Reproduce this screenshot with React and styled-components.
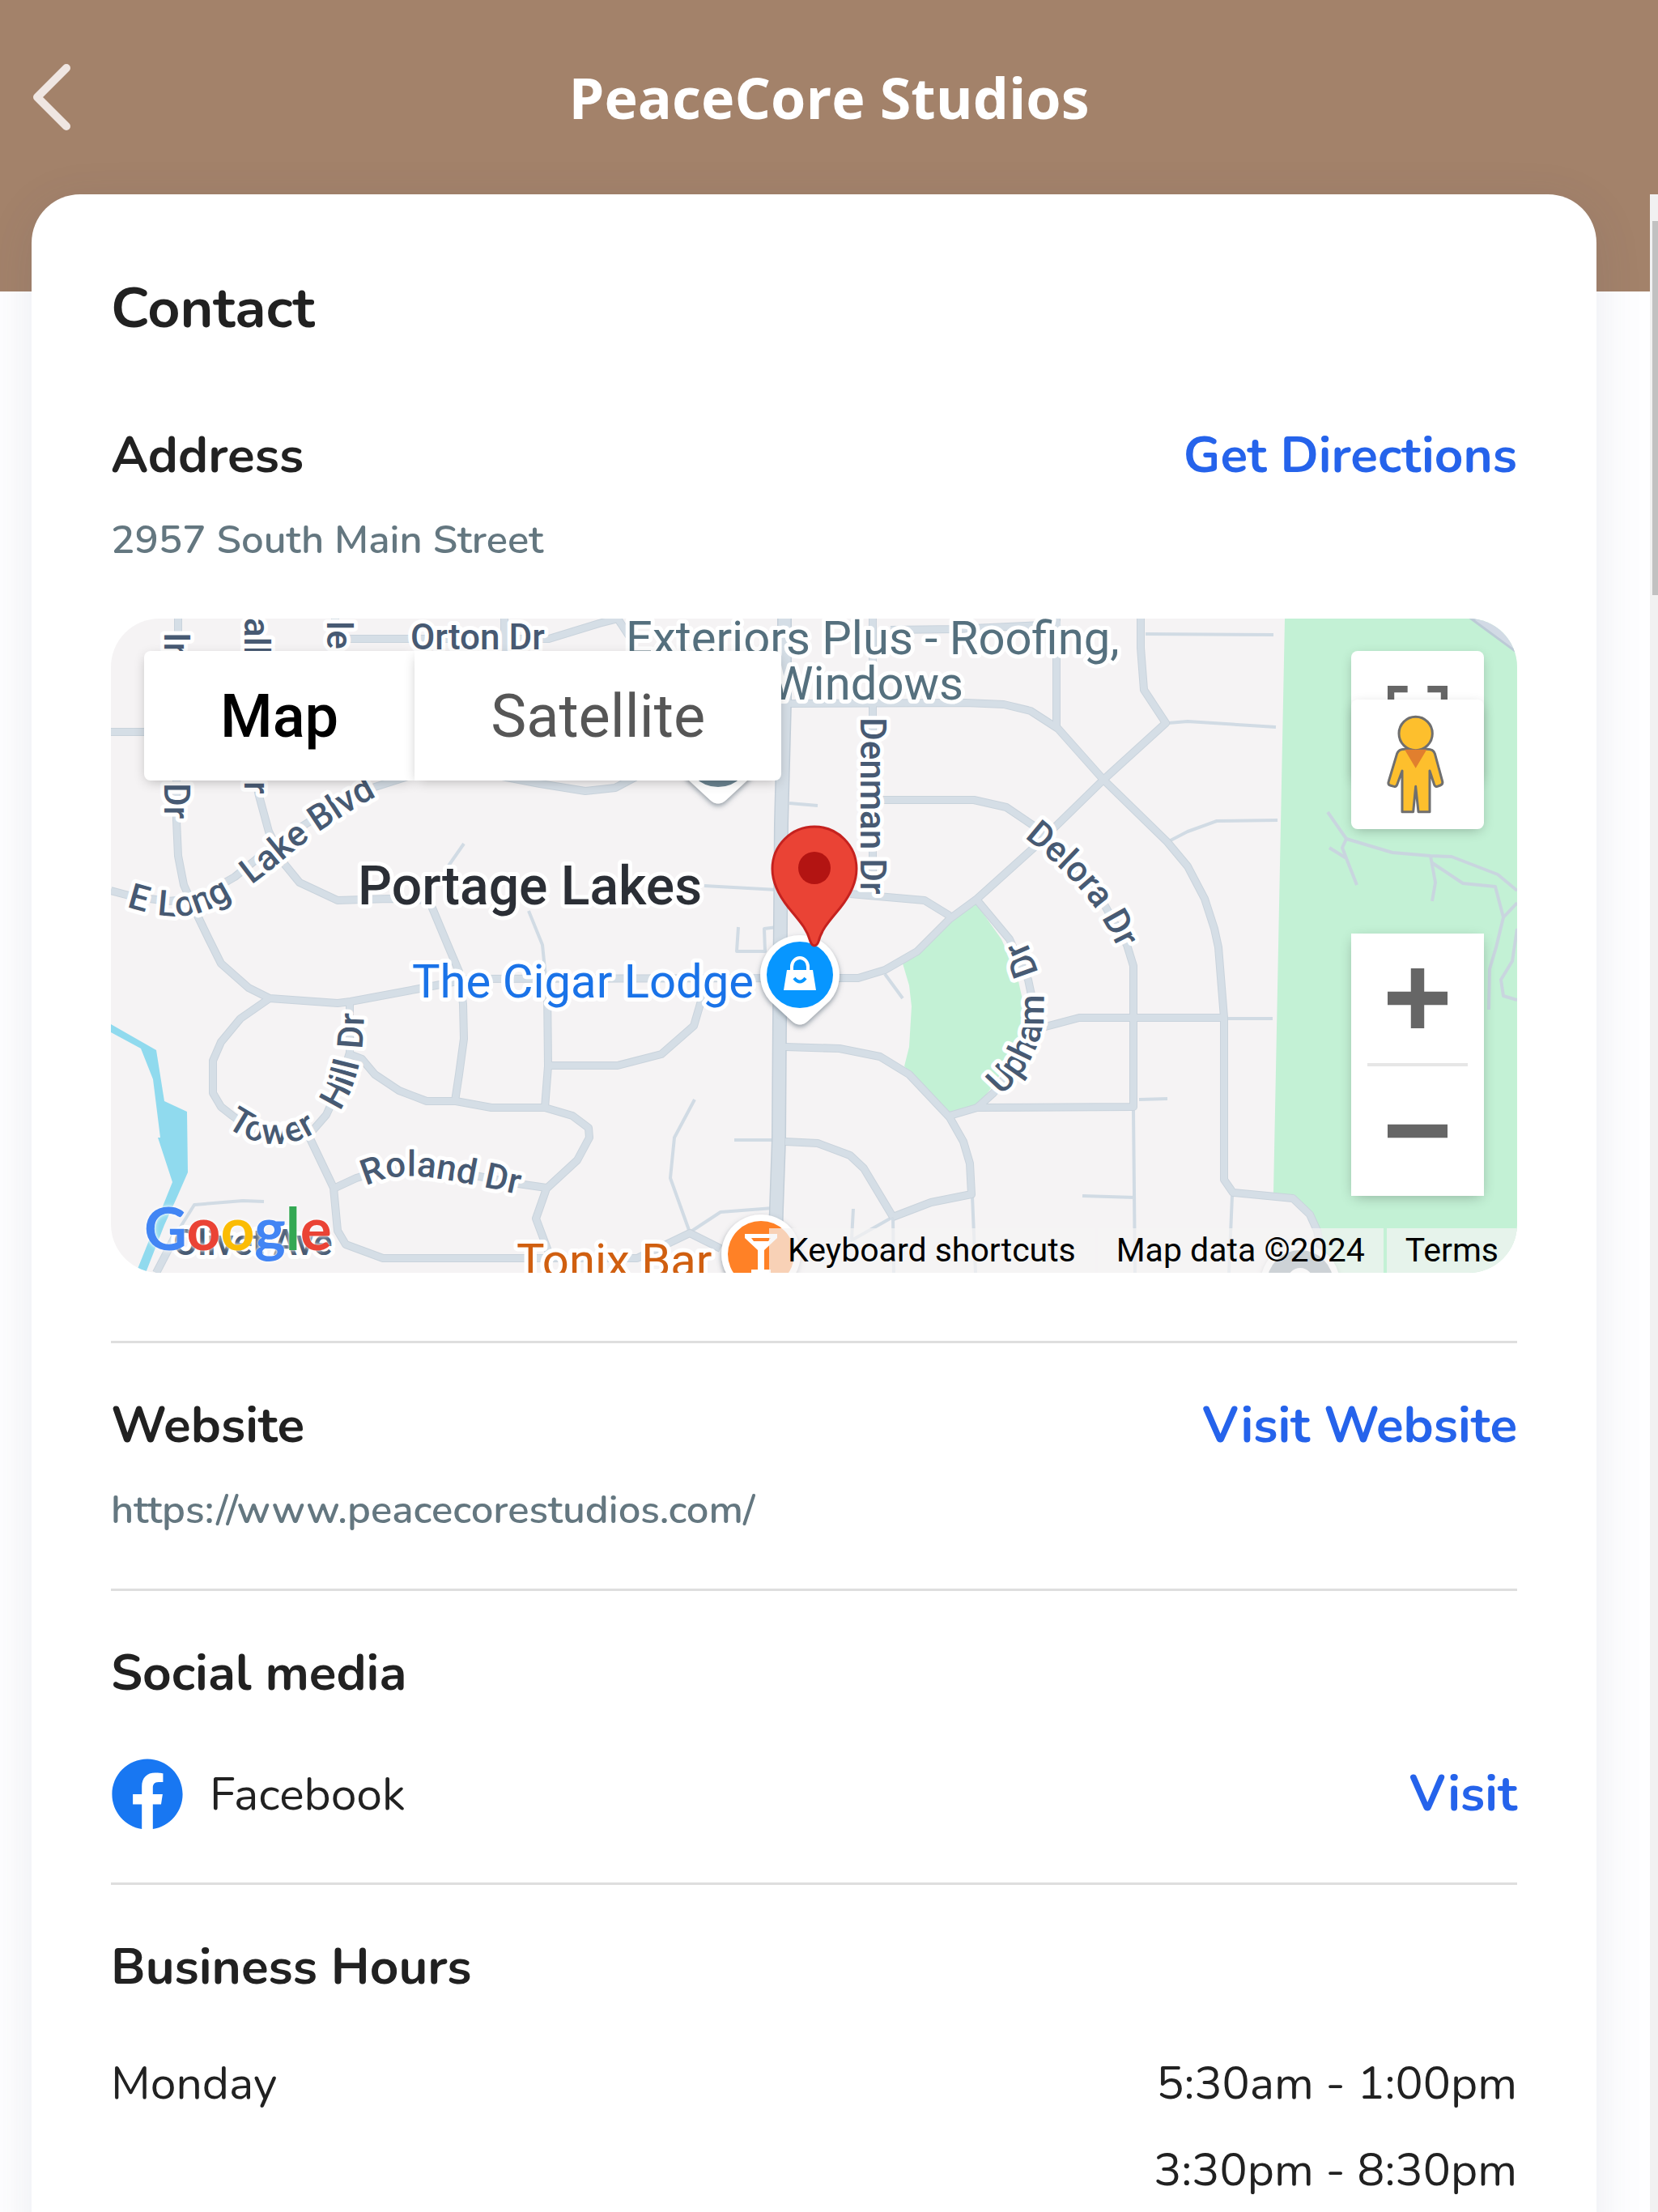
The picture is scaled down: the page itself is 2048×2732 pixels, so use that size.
import React, { useState } from "react";
import styled, { createGlobalStyle } from "styled-components";
import { FaFacebook } from "react-icons/fa";

const hours = [{ day: "Monday", slots: ["5:30am - 1:00pm", "3:30pm - 8:30pm"] }];

const streets = [
  "M137 904 H190",
  "M220 764 V806 M317 764 V806 M414 764 V806",
  "M218 960 V1013 L220 1057 L227 1093 L245 1133 L258 1160 L273 1190 L307 1220 L333 1233 L417 1239 L433 1237 L513 1222 L580 1209 L1060 1208 L1093 1198 L1133 1175 L1173 1135 L1207 1110 L1277 1047 L1363 963 L1440 893 L1413 852 L1409 800 V764",
  "M137 1100 L163 1107 L207 1113 L243 1110 L290 1083 L343 1040 L410 997 L463 972 L510 957",
  "M610 957 L667 968 L723 977 L760 973 L790 957",
  "M313 950 L320 983 L332 1027 L352 1068 L370 1090 L417 1112 L480 1110 L530 1112 L553 1167 L567 1200 L572 1240 L573 1283 L567 1327 L562 1360",
  "M333 1233 L297 1258 L273 1287 L263 1310 V1350 L273 1367 L287 1378 L317 1400 L347 1407 L383 1400 L403 1377 L420 1340 L432 1300 V1240",
  "M380 1400 L412 1467 L417 1520 L427 1537 L473 1554 H787 L827 1535 L852 1523 L890 1542",
  "M412 1468 L440 1455 L490 1440 L560 1447 L640 1462 L675 1467",
  "M434 1303 L447 1308 L463 1327 L493 1347 L527 1360 H563 L607 1368 H673 L707 1378 L727 1393 L728 1405 L713 1433 L675 1468 L662 1505 L677 1545",
  "M673 1368 L677 1317 L676 1220",
  "M677 1316 H763 L817 1302 L857 1267 L867 1233 V1208",
  "M1050 1104 L1142 1112 L1173 1131",
  "M1078 764 V1105",
  "M976 869 L1193 868 L1240 870 L1273 878 L1307 900 L1363 963 L1442 1040 L1467 1070 L1488 1110 L1500 1147 L1505 1170 L1512 1257 V1457 L1523 1473 L1597 1480 L1618 1500 L1627 1520 L1637 1572",
  "M1305 764 V900",
  "M1090 988 H1203 L1243 997 L1277 1020 L1310 1053 L1360 1110 L1392 1167 L1400 1193 V1367 L1207 1368 L1173 1378",
  "M1280 1271 L1333 1257 H1512",
  "M1207 1112 L1247 1160 L1270 1210 L1280 1257 L1263 1303 L1227 1350 L1207 1368",
  "M970 1293 L1037 1295 L1087 1305 L1123 1327 L1173 1380 L1190 1410 L1198 1437 L1200 1475 L1150 1485 L1103 1503",
  "M970 1410 L1010 1412 L1050 1427 L1067 1443 L1103 1503",
  "M430 789 H678 L740 770 L763 764 L780 790",
  "M623 764 V806",
  "M1100 778 L1180 777 L1310 771",
  "M193 1572 L220 1520",
];

const lanes = [
  "M573 1042 L550 1075",
  "M653 1125 L670 1167 L676 1227",
  "M858 1358 L833 1405 L828 1455 L852 1522 L890 1497 L955 1492",
  "M907 1408 H955",
  "M912 1145 L910 1175 H945 L944 1147 L960 1145",
  "M870 1094 L960 1099",
  "M975 992 L1010 995",
  "M1103 1503 L1050 1533 M1103 1503 L1104 1572 M1201 1477 L1205 1572 M1054 1493 L1052 1530",
  "M1400 1370 L1402 1572 M1407 1358 L1442 1357 M1337 1477 L1402 1479",
  "M1093 1203 L1115 1233",
  "M1415 783 L1573 784",
  "M1443 893 L1467 891 L1576 898",
  "M1442 1040 L1467 1027 L1503 1014 L1578 1013",
  "M1512 1258 H1572",
  "M1522 1477 L1518 1572",
  "M220 1520 L240 1488 L300 1483 L326 1484",
];

const trails = [
  "M1640 1003 L1663 1036 L1720 1053 L1767 1057 L1793 1058 L1850 1080 L1874 1100",
  "M1663 1036 L1658 1047 L1663 1060 L1676 1093 M1642 1047 L1663 1060",
  "M1767 1057 L1773 1090 L1769 1113",
  "M1768 1065 L1807 1091 L1847 1095 L1857 1133 L1848 1170 L1840 1197 L1839 1247",
  "M1857 1133 L1874 1115",
  "M1874 1147 L1868 1187 L1854 1210 L1857 1230 L1874 1235",
];

function Pin({ x, y, color, children }) {
  return (
    <g transform={`translate(${x} ${y})`}>
      <path
        d="M0 -49 A49 49 0 0 1 37 32 L10 57 Q0 66 -10 57 L-37 32 A49 49 0 0 1 0 -49 Z"
        fill="#fff"
        filter="url(#pin-shadow)"
      />
      <circle r="41" fill={color} />
      {children}
    </g>
  );
}

function MapDrawing() {
  return (
    <MapSvg
      viewBox="137 764 1737 808"
      preserveAspectRatio="xMidYMid slice"
      role="img"
      aria-label="Map of 2957 South Main Street"
    >
      <defs>
        <filter id="pin-shadow" x="-30%" y="-30%" width="160%" height="160%">
          <feDropShadow dx="0" dy="3" stdDeviation="3" floodColor="#50606e" floodOpacity="0.6" />
        </filter>
        <path id="long-lake" d="M156 1120 C190 1130 225 1140 266 1120 C325 1090 352 1055 405 1020 S450 992 510 960" />
        <path id="tower-hill" d="M279 1391 C310 1414 348 1420 382 1403 C412 1388 427 1365 437 1338 C448 1305 450 1285 450 1215" />
        <path id="roland" d="M452 1465 Q485 1448 530 1454 T670 1482" />
        <path id="delora" d="M1265 1034 Q1335 1090 1362 1136 T1398 1215" />
        <path id="upham" d="M1237 1353 Q1294 1300 1289 1235 Q1286 1195 1254 1135" />
      </defs>

      <rect x="137" y="764" width="1737" height="808" fill="#f5f3f4" />
      <path
        d="M1203 1112 L1237 1160 L1256 1203 L1268 1257 L1250 1305 L1222 1347 L1207 1365 L1175 1375 L1117 1317 L1123 1293 L1126 1243 L1123 1217 L1115 1190 L1147 1160 Z"
        fill="#c3f1d5"
      />
      <path d="M1587 764 L1573 1473 L1597 1477 L1627 1520 L1640 1572 H1874 V764 Z" fill="#c3f1d5" />
      <path d="M1817 764 L1874 806 V764 Z" fill="#d2dae5" stroke="#bccad6" strokeWidth="3" />
      <path
        d="M137 1265 L193 1297 L203 1360 L231 1373 L232 1448 L218 1480 L203 1513 L180 1572 H168 L213 1460 L195 1405 H198 L189 1333 L174 1295 L137 1275 Z"
        fill="#90daee"
      />

      <g fill="none" strokeLinejoin="round">
        <g stroke="#c9d5df" strokeWidth="4">
          {trails.map((d) => (
            <path key={d} d={d} />
          ))}
        </g>
        <g stroke="#d1dbe4" strokeWidth="4">
          {lanes.map((d) => (
            <path key={d} d={d} />
          ))}
        </g>
        <g stroke="#c9d3dc" strokeWidth="10">
          {streets.map((d) => (
            <path key={d} d={d} />
          ))}
        </g>
        <path d="M969 764 V867 L965 1017 L963 1260 L962 1407 L959 1493 L957 1572" stroke="#c3ced8" strokeWidth="18" />
        <g stroke="#d5dee6" strokeWidth="8">
          {streets.map((d) => (
            <path key={d} d={d} />
          ))}
        </g>
        <path d="M969 764 V867 L965 1017 L963 1260 L962 1407 L959 1493 L957 1572" stroke="#d5dee6" strokeWidth="15" />
      </g>

      <StreetName x="507" y="802">Orton Dr</StreetName>
      <StreetName transform="translate(1063 886) rotate(90)">Denman Dr</StreetName>
      <StreetName transform="translate(203 781) rotate(90)">Ir</StreetName>
      <StreetName transform="translate(302 763) rotate(90)">all</StreetName>
      <StreetName transform="translate(404 767) rotate(90)">le</StreetName>
      <StreetName transform="translate(203 967) rotate(90)">Dr</StreetName>
      <StreetName transform="translate(302 965) rotate(90)">r</StreetName>
      <StreetName x="214" y="1550">Olivet Ave</StreetName>
      <StreetName>
        <textPath href="#long-lake">E</textPath>
        <textPath href="#long-lake" startOffset="39">Long</textPath>
        <textPath href="#long-lake" startOffset="165">Lake</textPath>
        <textPath href="#long-lake" startOffset="270">Blvd</textPath>
      </StreetName>
      <StreetName>
        <textPath href="#tower-hill">Tower</textPath>
        <textPath href="#tower-hill" startOffset="158">Hill</textPath>
        <textPath href="#tower-hill" startOffset="240">Dr</textPath>
      </StreetName>
      <StreetName>
        <textPath href="#roland">Roland Dr</textPath>
      </StreetName>
      <StreetName>
        <textPath href="#delora">Delora Dr</textPath>
      </StreetName>
      <StreetName>
        <textPath href="#upham">Upham</textPath>
        <textPath href="#upham" startOffset="168">Dr</textPath>
      </StreetName>
      <TownName x="442" y="1117">Portage Lakes</TownName>
      <PlaceName x="773" y="808" $color="#55707e">Exteriors Plus - Roofing,</PlaceName>
      <PlaceName x="1190" y="864" textAnchor="end" $color="#55707e">Windows</PlaceName>
      <PlaceName x="509" y="1232" $color="#1a73e8">The Cigar Lodge</PlaceName>
      <PlaceName x="638" y="1577" $color="#d05f10">Tonix Bar</PlaceName>

      <Pin x={887} y={931} color="#6b8491" />
      <Pin x={988} y={1204} color="#0796ff">
        <path d="M-16 -6 H16 L20 19 H-20 Z" fill="#fff" />
        <path d="M-10 -5 V-10 A10 11 0 0 1 10 -10 V-5" fill="none" stroke="#fff" strokeWidth="4" />
        <path d="M-7 4 Q0 13 7 4" fill="none" stroke="#0796ff" strokeWidth="4" />
      </Pin>
      <Pin x={940} y={1549} color="#ff8126">
        <path d="M-20 -25 H20 V-20 L4 -5 V19 H12 V24 H-12 V19 H-4 V-5 L-20 -20 Z M-12 -20 L-9 -16 H9 L12 -20 Z" fill="#fff" fillRule="evenodd" />
      </Pin>
      <Pin x={1606} y={1585} color="#70828f">
        <circle cy="-3" r="16" fill="#fff" />
      </Pin>
      <path
        d="M1006 1021 A52 52 0 0 0 954 1073 C954 1091 962 1106 974 1121 C987 1137 997 1147 1001 1163 Q1003 1168 1006 1168 Q1009 1168 1011 1163 C1015 1147 1025 1137 1038 1121 C1050 1106 1058 1091 1058 1073 A52 52 0 0 0 1006 1021 Z"
        fill="#ea4335"
        stroke="#c5221f"
        strokeWidth="3"
      />
      <circle cx="1006" cy="1072" r="20" fill="#b31412" />
    </MapSvg>
  );
}

function PegmanIcon() {
  return (
    <svg width="164" height="160" viewBox="568 342 492 480" aria-hidden="true">
      <g fill="#fdbf2d" stroke="#6f6f6f" strokeWidth="9" strokeLinejoin="round">
        <path d="M765 526 H850 Q872 526 878 542 L906 645 Q909 656 898 660 L887 664 Q879 666 876 658 L859 606 V758 H817 L807 664 L798 758 H757 V606 L738 658 Q735 666 727 664 L712 660 Q703 656 707 645 L738 542 Q745 526 765 526 Z" />
        <circle cx="807" cy="468" r="62" />
      </g>
      <path d="M766 527 H848 L807 596 Z" fill="#e17f2e" />
    </svg>
  );
}

function App() {
  const [view, setView] = useState("Map");

  return (
    <Page>
      <GlobalStyle />
      <Header>
        <BackButton type="button" aria-label="Back">
          <svg width="48" height="84" viewBox="0 0 48 84" aria-hidden="true">
            <path d="M42 6 L6 42 L42 78" fill="none" stroke="#efe6e2" strokeWidth="10" strokeLinecap="round" strokeLinejoin="round" />
          </svg>
        </BackButton>
        <Title>PeaceCore Studios</Title>
      </Header>
      <Body>
        <Card>
          <CardTitle>Contact</CardTitle>
          <Row>
            <Heading>Address</Heading>
            <ActionLink href="#directions">Get Directions</ActionLink>
          </Row>
          <Detail>2957 South Main Street</Detail>
          <MapFrame>
            <MapDrawing />
            <TypeSwitch>
              {["Map", "Satellite"].map((name) => (
                <TypeButton key={name} type="button" $active={view === name} onClick={() => setView(name)}>
                  {name}
                </TypeButton>
              ))}
            </TypeSwitch>
            <FullscreenButton type="button" aria-label="Toggle fullscreen view">
              <svg width="74" height="74" viewBox="0 0 18 18" fill="#666" aria-hidden="true">
                <path d="M0 0v6h2V2h4V0zM16 0h-4v2h4v4h2V0zM16 16h-4v2h6v-6h-2zM2 12H0v6h6v-2H2z" />
              </svg>
            </FullscreenButton>
            <PegmanButton type="button" aria-label="Street View">
              <PegmanIcon />
            </PegmanButton>
            <Zoom>
              <ZoomButton type="button" aria-label="Zoom in">
                <svg width="74" height="74" viewBox="0 0 18 18" fill="#666" aria-hidden="true">
                  <path d="M18 7h-7V0H7v7H0v4h7v7h4v-7h7z" />
                </svg>
              </ZoomButton>
              <ZoomLine />
              <ZoomButton type="button" aria-label="Zoom out">
                <svg width="74" height="74" viewBox="0 0 18 18" fill="#666" aria-hidden="true">
                  <path d="M0 7h18v4H0z" />
                </svg>
              </ZoomButton>
            </Zoom>
            <GoogleLogo href="#google">
              <Letter $color="#4285f4">G</Letter>
              <Letter $color="#ea4335">o</Letter>
              <Letter $color="#fbbc04">o</Letter>
              <Letter $color="#4285f4">g</Letter>
              <Letter $color="#34a853">l</Letter>
              <Letter $color="#ea4335">e</Letter>
            </GoogleLogo>
            <Credits>
              <CreditButton type="button">Keyboard shortcuts</CreditButton>
              <Credit>Map data ©2024</Credit>
              <Credit as="a" href="#terms">Terms</Credit>
            </Credits>
          </MapFrame>

          <Section>
            <Row>
              <Heading>Website</Heading>
              <ActionLink href="#website">Visit Website</ActionLink>
            </Row>
            <Detail>https://www.peacecorestudios.com/</Detail>
          </Section>

          <Section>
            <Heading>Social media</Heading>
            <SocialRow>
              <FaFacebook size={90} color="#1877f2" aria-hidden="true" />
              <SocialName>Facebook</SocialName>
              <ActionLink href="#facebook">Visit</ActionLink>
            </SocialRow>
          </Section>

          <Section>
            <Heading>Business Hours</Heading>
            <HoursTable>
              <tbody>
                {hours.map(({ day, slots }) => (
                  <tr key={day}>
                    <th scope="row">{day}</th>
                    <td>
                      {slots.map((slot) => (
                        <div key={slot}>{slot}</div>
                      ))}
                    </td>
                  </tr>
                ))}
              </tbody>
            </HoursTable>
          </Section>
        </Card>
        <ScrollTrack>
          <ScrollThumb />
        </ScrollTrack>
      </Body>
    </Page>
  );
}

const GlobalStyle = createGlobalStyle`
  * {
    box-sizing: border-box;
  }
  body {
    margin: 0;
    font-family: Nunito, "Open Sans", sans-serif;
    color: #212121;
  }
  h1, h2, h3, p {
    margin: 0;
  }
  button {
    border: 0;
    padding: 0;
    font-family: Roboto, sans-serif;
    cursor: pointer;
  }
`;

const Page = styled.div`
  display: flex;
  flex-direction: column;
  height: 100vh;
  overflow: hidden;
  background: linear-gradient(#a3826a 360px, #fefeff 360px);
`;

const Header = styled.header`
  display: grid;
  grid-template-columns: 88px 1fr 88px;
  align-items: center;
  flex: none;
  height: 240px;
`;

const BackButton = styled.button`
  display: flex;
  justify-content: flex-end;
  background: none;
`;

const Title = styled.h1`
  font-family: "Open Sans", sans-serif;
  font-size: 70px;
  font-weight: 700;
  line-height: 92px;
  text-align: center;
  color: #fff;
`;

const Body = styled.div`
  display: flex;
  flex: 1;
  min-height: 0;
`;

const Card = styled.main`
  flex: 1;
  min-width: 0;
  height: max-content;
  min-height: 100%;
  margin: 0 66px 0 39px;
  padding: 101px 98px 0;
  border-radius: 60px 60px 0 0;
  background: #fff;
  box-shadow: 0 12px 60px rgba(60, 70, 110, 0.1);
`;

const CardTitle = styled.h2`
  margin-bottom: 102px;
  font-size: 70px;
  font-weight: 700;
  line-height: 80px;
`;

const Row = styled.div`
  display: flex;
  justify-content: space-between;
`;

const Heading = styled.h3`
  font-size: 62px;
  font-weight: 700;
  line-height: 80px;
`;

const ActionLink = styled.a`
  font-size: 62px;
  font-weight: 700;
  line-height: 80px;
  color: #2563eb;
  text-decoration: none;
`;

const Detail = styled.p`
  margin-top: 32px;
  font-size: 49px;
  font-weight: 600;
  line-height: 64px;
  color: #647780;
`;

const Section = styled.section`
  padding: 62px 0 65px;
  border-top: 3px solid #dedede;
`;

const SocialRow = styled.div`
  display: flex;
  align-items: center;
  margin-top: 65px;
  height: 88px;
`;

const SocialName = styled.span`
  flex: 1;
  margin-left: 32px;
  font-size: 57px;
`;

const HoursTable = styled.table`
  width: 100%;
  margin-top: 50px;
  border-collapse: collapse;
  font-size: 57px;
  line-height: 107px;
  th,
  td {
    padding: 0;
    vertical-align: top;
  }
  th {
    font-weight: 400;
    text-align: left;
  }
  td {
    text-align: right;
  }
`;

const MapFrame = styled.div`
  position: relative;
  height: 808px;
  margin: 65px 0 84px;
  border-radius: 60px;
  overflow: hidden;
  font-family: Roboto, sans-serif;
`;

const MapSvg = styled.svg`
  display: block;
  width: 100%;
  height: 100%;
`;

const MapText = styled.text`
  font-family: Roboto, sans-serif;
  paint-order: stroke;
  stroke: #fff;
  stroke-width: 10px;
  stroke-linejoin: round;
`;

const StreetName = styled(MapText)`
  font-size: 44px;
  font-weight: 500;
  fill: #475a73;
`;

const TownName = styled(MapText)`
  font-size: 66px;
  font-weight: 500;
  fill: #2b2f36;
`;

const PlaceName = styled(MapText)`
  font-size: 58px;
  fill: ${(props) => props.$color};
`;

const TypeSwitch = styled.div`
  position: absolute;
  top: 40px;
  left: 41px;
  display: flex;
  height: 160px;
`;

const TypeButton = styled.button`
  padding: 0 94px;
  font-size: 74px;
  font-weight: ${(props) => (props.$active ? 500 : 400)};
  color: ${(props) => (props.$active ? "#000" : "#565656")};
  background: #fff;
  box-shadow: 0 4px 16px -4px rgba(0, 0, 0, 0.3);
  &:first-child {
    border-radius: 8px 0 0 8px;
  }
  &:last-child {
    border-radius: 0 8px 8px 0;
  }
`;

const MapControl = styled.button`
  position: absolute;
  right: 41px;
  display: flex;
  align-items: center;
  justify-content: center;
  width: 164px;
  height: 160px;
  border-radius: 8px;
  background: #fff;
  box-shadow: 0 4px 16px -4px rgba(0, 0, 0, 0.3);
`;

const FullscreenButton = styled(MapControl)`
  top: 40px;
`;

const PegmanButton = styled(MapControl)`
  top: 100px;
`;

const Zoom = styled.div`
  position: absolute;
  right: 41px;
  bottom: 95px;
  width: 164px;
  background: #fff;
  box-shadow: 0 4px 16px -4px rgba(0, 0, 0, 0.3);
`;

const ZoomButton = styled.button`
  display: flex;
  align-items: center;
  justify-content: center;
  width: 100%;
  height: 160px;
  background: none;
`;

const ZoomLine = styled.div`
  height: 4px;
  margin: 0 20px;
  background: #e6e6e6;
`;

const GoogleLogo = styled.a`
  position: absolute;
  left: 41px;
  bottom: 8px;
  font-family: Lato, sans-serif;
  font-size: 73px;
  font-weight: 700;
  line-height: 96px;
  text-decoration: none;
  text-shadow: 0 0 6px rgba(255, 255, 255, 0.8), 0 0 3px #fff;
`;

const Letter = styled.span`
  color: ${(props) => props.$color};
`;

const Credits = styled.div`
  position: absolute;
  right: 0;
  bottom: 0;
  display: flex;
  gap: 4px;
`;

const Credit = styled.span`
  padding: 0 23px;
  font-size: 41px;
  line-height: 55px;
  color: #000;
  text-decoration: none;
  background: rgba(245, 243, 244, 0.7);
`;

const CreditButton = styled.button`
  padding: 0 23px;
  font-size: 41px;
  line-height: 55px;
  color: #000;
  background: rgba(245, 243, 244, 0.7);
`;

const ScrollTrack = styled.div`
  width: 10px;
  padding: 33px 0 33px 3px;
  background: #f1f1f1;
`;

const ScrollThumb = styled.div`
  height: 462px;
  background: #c1c1c1;
`;

export default App;
